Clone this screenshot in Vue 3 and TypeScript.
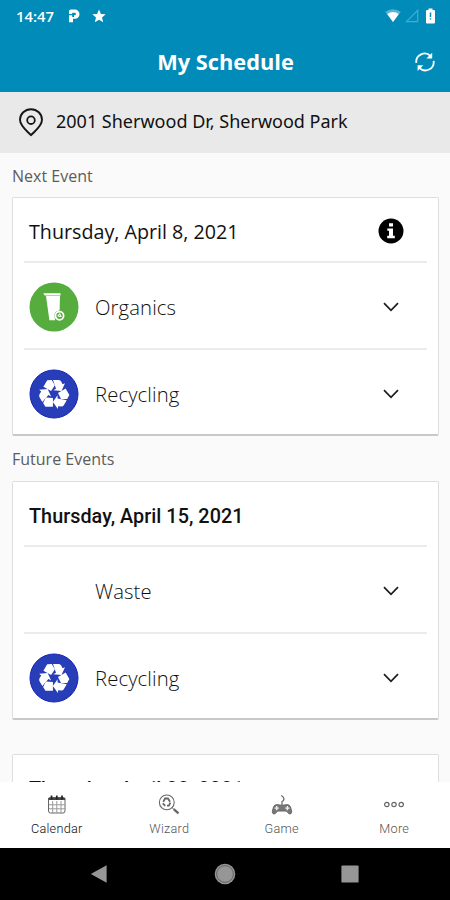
<script setup lang="ts">
interface Pickup {
  name: string
  kind: 'organics' | 'recycling' | 'none'
}
interface Tab {
  label: string
  icon: 'calendar' | 'wizard' | 'game' | 'more'
}

const nextPickups: Pickup[] = [
  { name: 'Organics', kind: 'organics' },
  { name: 'Recycling', kind: 'recycling' },
]
const futurePickups: Pickup[] = [
  { name: 'Waste', kind: 'none' },
  { name: 'Recycling', kind: 'recycling' },
]
const sections = [
  { title: 'Next Event', date: 'Thursday, April 8, 2021', next: true, pickups: nextPickups },
  { title: 'Future Events', date: 'Thursday, April 15, 2021', next: false, pickups: futurePickups },
]
const tabs: Tab[] = [
  { label: 'Calendar', icon: 'calendar' },
  { label: 'Wizard', icon: 'wizard' },
  { label: 'Game', icon: 'game' },
  { label: 'More', icon: 'more' },
]
</script>

<template>
  <div class="screen">
    <header class="top">
      <div class="status">
        <span class="time">14:47</span>
        <svg class="parking" width="12" height="14" viewBox="0 0 12 14">
          <path d="M2.8 .6H6.9A4.6 4.6 0 0 1 6.9 9.8H5V13.3H1V6.2H4.2V8H6V6.3H6.6A1.3 1.3 0 0 0 6.6 3.7H4.2V5H1V2.4Q1 .6 2.8 .6z" fill="#fff" />
        </svg>
        <svg class="star" width="14" height="14" viewBox="0 0 14 14">
          <path d="M7 .5L8.9 4.9 13.7 5.3 10 8.5 11.2 13.2 7 10.7 2.8 13.2 4 8.5 .3 5.3 5.1 4.9z" fill="#fff" />
        </svg>
        <span class="grow"></span>
        <svg width="16" height="14" viewBox="0 0 16 14">
          <path d="M.2 2.8Q8-2.5 15.8 2.8L8 13z" fill="#fff" opacity=".35" />
          <path d="M2.2 5Q8 .8 13.8 5L8 13z" fill="#fff" />
        </svg>
        <svg class="signal" width="14" height="14" viewBox="0 0 14 14">
          <path d="M1.5 12.7L12.7 1.3V12.7z" fill="none" stroke="#48abcd" stroke-width="1.2" />
        </svg>
        <svg class="battery" width="9" height="16" viewBox="0 0 9 16">
          <path d="M0 3Q0 2 1 2H2.5V.5H6.5V2H8Q9 2 9 3V14.5Q9 15.5 8 15.5H1Q0 15.5 0 14.5z" fill="#fff" />
          <path d="M4.5 4.5V9M4.5 10.2V11.5" stroke="#078bb8" stroke-width="1.5" />
        </svg>
      </div>
      <div class="titlebar">
        <h1>My Schedule</h1>
        <svg class="refresh" width="20" height="20" viewBox="0 0 20 20">
          <g fill="none" stroke="#fff" stroke-width="1.8">
            <path d="M1.3 10.8A8.3 8.3 0 0 1 15.6 4.2" />
            <path d="M18.6 8.9A8.3 8.3 0 0 1 4.4 15.8" />
          </g>
          <path d="M17.2 .8V6.6H11.4zM2.6 13.2H8.3L2.6 19z" fill="#fff" />
        </svg>
      </div>
    </header>

    <div class="address">
      <svg class="pin" width="26" height="29" viewBox="0 0 26 29" fill="none" stroke="#161616">
        <path d="M13 27.2C9.8 23.5 2 18.4 2 11.8A11 10.6 0 0 1 24 11.8C24 18.4 16.2 23.5 13 27.2z" stroke-width="1.9" stroke-linejoin="round" />
        <circle cx="13" cy="12.2" r="3.8" stroke-width="1.8" />
      </svg>
      <span>2001 Sherwood Dr, Sherwood Park</span>
    </div>

    <main class="list">
      <section v-for="s in sections" :key="s.title" :class="{ upcoming: s.next }">
        <h2>{{ s.title }}</h2>
        <div class="card">
          <div class="date">
            <span :class="s.next ? 'dateNext' : 'dateFuture'">{{ s.date }}</span>
            <svg v-if="s.next" width="26" height="26" viewBox="0 0 26 26">
              <circle cx="13" cy="13" r="12.5" fill="#000" />
              <path d="M11 5.2H15V8.4H11zM9.3 10.4H15V17.8H16.8V20.3H9.2V17.8H11V12.8H9.3z" fill="#fff" />
            </svg>
          </div>
          <div v-for="p in s.pickups" :key="p.name" class="pickup">
            <span class="badge">
              <svg v-if="p.kind === 'organics'" width="50" height="50" viewBox="-25 -25 50 50">
                <circle r="24.5" fill="#56ac3d" />
                <path d="M-10.8-13.8H6.5V-11.5H-9.2zM-8-11H6L5.6 3.4A5 5 0 0 0 .4 9.5L1.2 13.2H-4.6z" fill="#fff" />
                <circle cx="5.5" cy="8.8" r="4.1" fill="#56ac3d" stroke="#fff" stroke-width="1.8" />
                <path d="M3.6 9.2L5.7 6.9 7 9.5H4.5" fill="none" stroke="#fff" stroke-width="1.1" />
              </svg>
              <svg v-else-if="p.kind === 'recycling'" width="50" height="50" viewBox="-25 -25 50 50">
                <circle r="24" fill="#283db8" stroke="#1524b5" stroke-width="1" />
                <g fill="#fff">
                  <g v-for="turn in [0, 120, 240]" :key="turn" :transform="`rotate(${turn})`">
                    <path d="M-10.6-7.3L-6.8-13.8-2.3-13.9.9-8.8-2.9-2.9z" />
                    <path d="M-1-14.1H4.8Q6.4-14 7.2-12.4L8.6-9.8 11-10.8 7.5-3-.7-3.7 2-5.3z" />
                  </g>
                </g>
              </svg>
            </span>
            <span class="name">{{ p.name }}</span>
            <svg class="chevron" width="18" height="12" viewBox="0 0 18 12">
              <path d="M2 2.2L9 9.3 16 2.2" fill="none" stroke="#1c1c1c" stroke-width="1.7" />
            </svg>
          </div>
        </div>
      </section>
      <div class="card trailing">
        <div class="date"><span class="dateFuture">Thursday, April 22, 2021</span></div>
      </div>
    </main>

    <nav class="tabs">
      <div v-for="t in tabs" :key="t.label" class="tab" :class="{ active: t.icon === 'calendar' }">
        <svg width="22" height="22" viewBox="0 0 22 22" fill="none" stroke="#666">
          <g v-if="t.icon === 'calendar'">
            <rect x="2.5" y="3.5" width="16.5" height="15.5" rx="2" stroke="#666" />
            <path d="M2.3 3.8H19.2V6H2.3z" fill="#444" stroke="none" />
            <path d="M5.5 1.5V5.5M10.8 1.5V5.5M16 1.5V5.5" stroke="#222" stroke-width="1.7" />
            <path d="M3 10.8H19M3 14.8H19M6.7 7V19M10.8 7V19M15 7V19" stroke="#999" />
          </g>
          <g v-else-if="t.icon === 'wizard'">
            <circle cx="8.8" cy="8.4" r="7.4" stroke-width="1.1" />
            <path d="M5.3 7.8L7 4.5H10L12 7.7M12.4 8.6L10.9 11.7H9M7.2 11.8L4.8 9.4" stroke-width="1.8" />
            <path d="M14 13.5L16 15.5" stroke-width="1" />
            <path d="M15.7 15.2L20.5 19.3" stroke-width="2.3" />
          </g>
          <g v-else-if="t.icon === 'game'">
            <path d="M11 11V7.5Q13.5 6.5 12.8 4.3Q12.2 2.3 10.2 1.5" stroke-width="1.2" />
            <path d="M5.5 10.6Q11 12 16.5 10.6Q18.5 10.8 19.5 13L20.7 17.5Q20.5 20.5 18.3 20L15.3 17H6.7L3.7 20Q1.5 20.5 1.3 17.5L2.5 13Q3.5 10.8 5.5 10.6z" fill="#777" stroke="#666" />
            <path d="M5.7 12V16.2M3.6 14.1H7.8M14.3 14.1H18.5M16.4 12V16.2" stroke="#eee" stroke-width="1.4" />
          </g>
          <g v-else stroke-width="1.2">
            <circle cx="3.8" cy="10.5" r="2.2" />
            <circle cx="11" cy="10.5" r="2.2" />
            <circle cx="18.2" cy="10.5" r="2.2" />
          </g>
        </svg>
        <span>{{ t.label }}</span>
      </div>
    </nav>

    <footer class="system">
      <svg width="18" height="20" viewBox="0 0 18 20"><path d="M.8 10L16.6 1.2V18.8z" fill="#969696" /></svg>
      <svg width="22" height="22" viewBox="0 0 22 22">
        <circle cx="11" cy="11" r="10.3" fill="#969696" />
        <circle cx="11" cy="11" r="8.4" fill="none" stroke="#5d5d5d" stroke-width=".9" />
      </svg>
      <svg width="18" height="18" viewBox="0 0 18 18"><rect x=".4" y=".4" width="17.2" height="17.2" rx="1.2" fill="#969696" /></svg>
    </footer>
  </div>
</template>

<style>
body {
  margin: 0;
}
</style>

<style scoped>
.screen {
  width: 450px;
  height: 900px;
  display: flex;
  flex-direction: column;
  overflow: hidden;
  background: #fafafa;
  font-family: "Open Sans", "Noto Sans", sans-serif;
  color: #111;
}
svg {
  display: block;
  flex: none;
}
.top {
  height: 92px;
  flex: none;
  background: #018bb9;
  color: #fff;
}
.status {
  height: 32px;
  box-sizing: border-box;
  display: flex;
  align-items: center;
  padding: 0 15px 0 16px;
}
.time {
  width: 52px;
  font: 600 14.8px/32px "Open Sans", sans-serif;
}
.star {
  margin-left: 12px;
}
.grow {
  flex: 1;
}
.signal {
  margin-left: 4px;
}
.battery {
  margin-left: 7px;
}
.titlebar {
  height: 60px;
  display: grid;
  grid-template-columns: 51px 1fr 50px;
  align-items: center;
}
h1 {
  grid-column: 2;
  margin: 0;
  text-align: center;
  font-size: 21.8px;
  line-height: 60px;
  font-weight: 700;
}
.refresh {
  margin-left: 15px;
}
.address {
  height: 61px;
  flex: none;
  box-sizing: border-box;
  display: flex;
  align-items: center;
  gap: 12px;
  padding: 0 18px 4px;
  background: #e9e9e9;
  font: 400 18px/24px "Noto Sans", sans-serif;
}
.pin {
  margin-top: 4px;
}
.list {
  flex: 1;
  min-height: 0;
  overflow: hidden;
  padding: 0 11px 0 12px;
}
h2 {
  height: 45px;
  margin: 0;
  font-size: 16px;
  line-height: 46px;
  font-weight: 400;
  color: #5c5c5c;
}
.upcoming h2 {
  height: 44px;
}
.card {
  box-sizing: border-box;
  height: 239px;
  padding: 0 11px;
  background: #fff;
  border: 1px solid #dedede;
  border-bottom: 2px solid #c8c8c8;
  border-radius: 2px;
}
.date {
  height: 63px;
  display: flex;
  align-items: center;
  justify-content: space-between;
  padding: 3px 23px 0 5px;
  box-sizing: border-box;
}
.dateNext {
  font-size: 19.7px;
}
.dateFuture {
  padding-top: 4px;
  font: 500 19.8px/24px Roboto, sans-serif;
  letter-spacing: 0.04px;
}
.pickup {
  height: 87px;
  box-sizing: border-box;
  border-top: 2px solid #ebebeb;
  display: flex;
  align-items: center;
  padding: 3px 27px 0 5px;
}
.badge {
  width: 50px;
  height: 50px;
}
.name {
  flex: 1;
  margin-left: 16px;
  font-size: 20.3px;
  font-weight: 300;
  letter-spacing: 0.1px;
  color: #111;
}
.trailing {
  margin-top: 34px;
}
.tabs {
  height: 66px;
  flex: none;
  display: grid;
  grid-template-columns: repeat(4, 112.5px);
  background: #fff;
}
.tab {
  display: flex;
  flex-direction: column;
  align-items: center;
  padding: 12px 0 0 1px;
  gap: 5px;
  font: 300 12.7px/15px Roboto, sans-serif;
  letter-spacing: 0.25px;
  color: #555;
}
.active {
  color: #111;
}
.system {
  height: 52px;
  flex: none;
  box-sizing: border-box;
  display: flex;
  align-items: center;
  justify-content: space-between;
  padding: 0 91px 0 90px;
  background: #000;
}
</style>
